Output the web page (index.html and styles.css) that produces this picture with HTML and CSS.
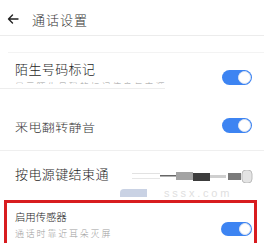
FILE: index.html
```html
<!DOCTYPE html>
<html lang="zh">
<head>
<meta charset="utf-8">
<link rel="stylesheet" href="styles.css">
</head>
<body>
<div class="screen">
  <header class="topbar">
    <svg class="back" width="12" height="10" viewBox="0 0 12 10"><path d="M11 5H1.5M5.5 1L1.5 5l4 4" fill="none" stroke="#222" stroke-width="1.4" stroke-linecap="round" stroke-linejoin="round"/></svg>
    <span class="title">通话设置</span>
  </header>
  <div class="gap"></div>
  <div class="row row1">
    <div class="text">
      <div class="label">陌生号码标记</div>
      <div class="sub cut-sub">显示陌生号码的标记信息与来源</div>
    </div>
    <span class="switch"><span class="knob"></span></span>
  </div>
  <div class="rule-short"></div>
  <div class="row row2">
    <span class="label cut-top">来电翻转静音</span>
    <span class="switch"><span class="knob"></span></span>
  </div>
  <div class="row row3">
    <span class="label">按电源键结束通</span>
    <svg class="artifact" width="124" height="13" viewBox="0 0 124 13">
      <rect x="2" y="3" width="28" height="1" fill="#e2e2e2"/>
      <rect x="2" y="8" width="28" height="1" fill="#e6e6e6"/>
      <rect x="30" y="5" width="16" height="1.5" fill="#666"/>
      <rect x="46" y="2" width="17" height="8" fill="#a3a3a3"/>
      <rect x="63" y="3" width="17" height="8" fill="#3c3c3c"/>
      <rect x="80" y="5" width="16" height="3" fill="#cfcfcf"/>
      <rect x="98" y="3" width="13" height="7" fill="#7a7a7a"/>
      <rect x="112" y="0" width="10" height="13" rx="4" fill="#e4e4e4" stroke="#bdbdbd"/>
    </svg>
  </div>
  <div class="wm">
    <span class="blob"></span>
    <span class="wmtext">sssx.com</span>
  </div>
  <div class="card">
    <div class="text">
      <div class="card-label">启用传感器</div>
      <div class="sub">通话时靠近耳朵灭屏</div>
    </div>
    <span class="switch"><span class="knob"></span></span>
  </div>
</div>
</body>
</html>
```

FILE: styles.css
```css
* { box-sizing: border-box; }
html, body { margin: 0; padding: 0; background: #fff; }
body {
  font-family: "Noto Sans CJK SC", "Noto Sans", sans-serif;
  font-weight: 300;
  color: #222;
  width: 264px;
  height: 243px;
  overflow: hidden;
}
.screen { width: 264px; }

.topbar {
  height: 36px;
  padding: 3px 0 0 7px;
  display: flex;
  align-items: center;
  border-bottom: 1px solid #ececec;
}
.back { display: block; }
.title {
  margin-left: 13px;
  font-size: 13px;
  line-height: 15px;
  letter-spacing: 1px;
  color: #333;
}

.gap {
  height: 17px;
  margin-left: 8px;
  border-bottom: 1px solid #f3f3f3;
}

.row {
  display: flex;
  justify-content: space-between;
  align-items: flex-start;
  padding: 0 12px 0 15px;
}
.label {
  font-size: 13px;
  line-height: 15px;
  letter-spacing: 0.4px;
  color: #1e1e1e;
}

.switch {
  display: flex;
  justify-content: flex-end;
  align-items: center;
  width: 30px;
  height: 15px;
  padding: 0 1px;
  border-radius: 8px;
  background: #3d84f2;
}
.knob {
  width: 13px;
  height: 13px;
  border-radius: 50%;
  background: #fff;
  border: 1px solid #dfe6f2;
}

.row1 { height: 35px; padding-top: 8px; }
.row1 .switch { margin-top: 9px; }
.cut-sub {
  margin-top: 4px;
  height: 3px;
  overflow: hidden;
  color: #d0d0d0;
}
.rule-short { width: 165px; height: 1px; background: #ededed; }

.row2 { height: 62px; padding-top: 29px; border-bottom: 1px solid #efefef; }
.cut-top { color: #333; clip-path: inset(30% 0 0 0); }

.row3 { height: 35px; padding-top: 15px; padding-right: 12px; }
.artifact { display: block; margin-top: 4px; margin-right: -2px; }

.wm {
  height: 14px;
  display: flex;
  align-items: center;
  padding-left: 120px;
}
.blob {
  width: 27px;
  height: 8px;
  border-radius: 4px 0 0 0;
  background: #c9d2e4;
}
.wmtext {
  margin-left: 17px;
  font-family: "Liberation Sans", sans-serif;
  font-size: 11px;
  line-height: 11px;
  letter-spacing: 2.8px;
  color: #e0e0e0;
}

.card {
  margin: 0 7px 0 4px;
  height: 50px;
  border: 3px solid #d81c1f;
  border-bottom: none;
  display: flex;
  justify-content: space-between;
  align-items: flex-start;
  padding: 7px 2px 0 8px;
}
.card-label {
  font-size: 10.5px;
  line-height: 13px;
  letter-spacing: -0.2px;
  color: #1e1e1e;
}
.sub {
  margin-top: 5px;
  font-size: 9px;
  line-height: 11px;
  letter-spacing: 1.8px;
  color: #a0a0a0;
}
.card .switch { margin-top: 12px; height: 14px; width: 31px; }
.card .knob { width: 12px; height: 12px; }
```
